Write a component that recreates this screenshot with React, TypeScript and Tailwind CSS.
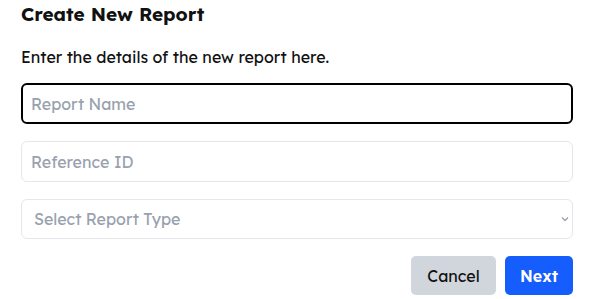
import React from 'react';

export default function App() {
    return (
        <div className="w-[593px] h-[299px] bg-white pl-[21px] pr-[20px] text-[#111] font-['Lexend','Open_Sans',sans-serif] overflow-hidden">
            <h2 className="text-[19px] font-bold leading-[28px]">Create New Report</h2>
            <p className="text-[16px] leading-[22px] mt-[18px]">Enter the details of the new report here.</p>

            <form className="mt-[15px] flex flex-col gap-[17px]">
                <input
                    type="text"
                    placeholder="Report Name"
                    className="h-[41px] w-full rounded-[6px] border-2 border-black px-[8px] text-[16px] placeholder:text-gray-400 outline-none"
                />
                <input
                    type="text"
                    placeholder="Reference ID"
                    className="h-[41px] w-full rounded-[6px] border border-gray-200 px-[9px] text-[16px] placeholder:text-gray-400 outline-none"
                />
                <div className="relative">
                    <select
                        defaultValue=""
                        className="h-[40px] w-full appearance-none rounded-[6px] border border-gray-200 bg-white pl-[12px] text-[16px] text-gray-400 outline-none"
                    >
                        <option value="" disabled>Select Report Type</option>
                    </select>
                    <svg className="pointer-events-none absolute right-[3px] top-[16px] w-[10px] h-[8px] text-gray-400" viewBox="0 0 10 8" fill="none" stroke="currentColor" strokeWidth="1.3">
                        <path d="M2 2.5l3 3 3-3" />
                    </svg>
                </div>
                <div className="flex justify-end gap-[9px]">
                    <button type="button" className="h-[39px] w-[85px] rounded-[5px] bg-gray-300 text-[16px] text-[#111]">
                        Cancel
                    </button>
                    <button type="button" className="h-[39px] w-[68px] rounded-[5px] bg-blue-600 text-[16px] font-semibold text-white">
                        Next
                    </button>
                </div>
            </form>
        </div>
    );
}
